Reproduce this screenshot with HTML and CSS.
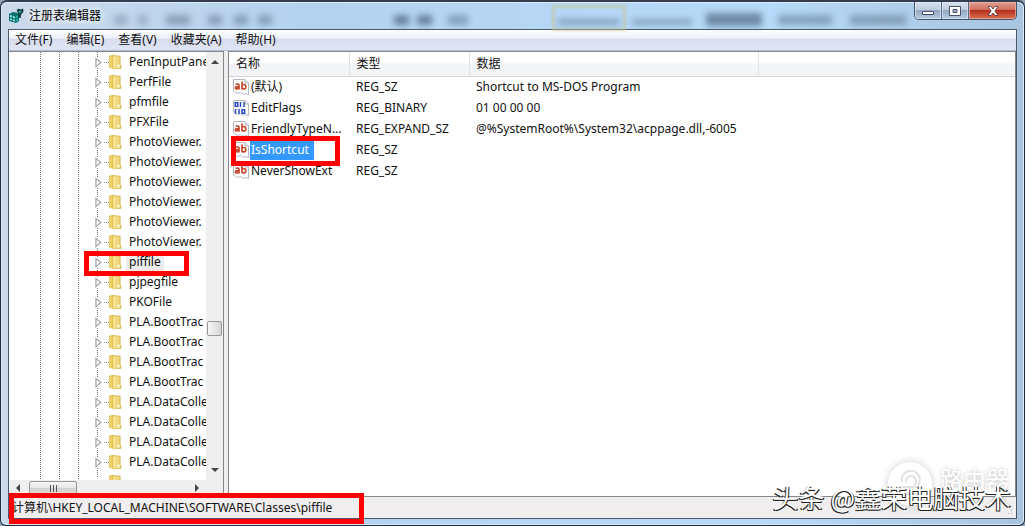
FILE: index.html
```
<!DOCTYPE html>
<html lang="zh-CN">
<head>
<meta charset="utf-8">
<title>注册表编辑器</title>
<link rel="stylesheet" href="styles.css">
</head>
<body>
<svg width="0" height="0" class="defs" aria-hidden="true">
  <defs>
    <linearGradient id="fa" x1="0" x2="1"><stop offset="0" stop-color="#f6dc78"/><stop offset="1" stop-color="#e0bd4c"/></linearGradient>
    <linearGradient id="fb" x1="0" x2="1"><stop offset="0" stop-color="#fdf3b4"/><stop offset="1" stop-color="#e6c65c"/></linearGradient>
    <symbol id="folder" viewBox="0 0 14 16">
      <path d="M1.200 2 6 1v13.500l-4.800-1z" fill="url(#fa)" stroke="#d9bb58" stroke-width=".6"/>
      <path d="M5.500 2h6.700v8.500l.8 1v3H5.500z" fill="url(#fb)" stroke="#cfac44" stroke-width=".6"/>
      <path d="M5 3 8 1v12.500L5.800 15.500 5 14.500z" fill="#fbe995" stroke="#d4b450" stroke-width=".5"/>
      <path d="M9.500 10.500h2v3h-2z" fill="#fffbe0"/>
    </symbol>
    <symbol id="arrow" viewBox="0 0 6 9"><path d="M.8 1v7l4.200-3.500z" fill="#fff" stroke="#a0a0a0"/></symbol>
    <symbol id="page" viewBox="0 0 16 16"><path d="M.5.500h11.500l3.500 3.500v11.500l-2.500-1-2.500.800-3-1.800-3 1L.5 12z" fill="#fff" stroke="#b4b8c0"/><path d="M12 .5V4h3.500" fill="#e8eaf0" stroke="#b4b8c0"/></symbol>
    <symbol id="str" viewBox="0 0 16 16"><use href="#page"/><g fill="none" stroke="#c8462c" stroke-width="1.700"><path d="M2.500 5.300q3.500-1 3.500 1.200v4M6 7.500q-3.800 0-3.600 1.500.4 1.800 3.600 0M9 2.500v8M9 6q3.800-1.500 3.800 1.700 0 3-3.800 1.800"/></g></symbol>
    <symbol id="bin" viewBox="0 0 16 16"><use href="#page"/><g fill="none" stroke="#2b4cc0" stroke-width="1.500"><path d="M2.200 2.700h2.600v3.600H2.200zM7.500 2v5M11 2v5M2.500 9v5M6 9v5M9 9.700h2.600v3.600H9z"/></g></symbol>
  </defs>
</svg>
<div class="window">
  <header class="titlebar">
    <div class="ghost" aria-hidden="true"><i class="g1"></i><i class="g2"></i><i class="g3"></i><i class="g4"></i><i class="g5"></i><i class="g6"></i><i class="g7"></i><i class="g8"></i><i class="g9"></i><i class="g10"></i><i class="g11"></i><i class="g12"></i><i class="g13"></i><i class="g14"></i><i class="g15"></i></div>
    <svg class="app-icon" viewBox="0 0 16 16"><path d="M1 6l4-2 6 1v8l-3 2-7-2z" fill="#0c6f70"/><path d="M2 7l2 .5v2L2 9zM5 8l2 .5v2L5 10zM2 10.500l2 .5v1.500L2 12zM5 11.500l2 .5v1.500L5 13z" fill="#8ff0e8"/><path d="M8 8l2-1v2l-2 1zM8 11.500l2-1v2l-2 1z" fill="#23b5ac"/><path d="M10 1l3 1 2-1v3l-2 2-1 4-2-2 1-3-2-2z" fill="#075255" stroke="#03282c" stroke-width=".7"/><path d="M11 3l2 .5-1 1.500z" fill="#8ff0e8"/></svg>
    <h1 class="title">注册表编辑器</h1>
    <div class="controls">
      <button class="ctl" aria-label="最小化"><svg viewBox="0 0 14 10" width="14" height="10"><path d="M1.500 5.500h11v3h-11z" fill="#fff" stroke="#4b5468"/></svg></button>
      <button class="ctl" aria-label="最大化"><svg viewBox="0 0 12 10" width="12" height="10"><path d="M.5.500h11v9H.5z" fill="#fff" stroke="#4b5468"/><path d="M4 3.500h4v3H4z" fill="#9bb0c8" stroke="#4b5468"/></svg></button>
      <button class="ctl close" aria-label="关闭"><svg viewBox="0 0 12 10" width="12" height="10"><path d="M1 .5h3L6 3 8 .5h3L7.800 5 11 9.500H8L6 7 4 9.500H1L4.200 5z" fill="#fff" stroke="#5b3a40" stroke-width=".8"/></svg></button>
    </div>
  </header>
  <main class="client">
    <nav class="menu">
      <button>文件(F)</button><button>编辑(E)</button><button>查看(V)</button><button>收藏夹(A)</button><button>帮助(H)</button>
    </nav>
    <div class="panes">
      <section class="tree-pane">
        <div class="tree-row">
          <ul class="tree">
            <li><svg class="arr"><use href="#arrow"/></svg><svg class="fld"><use href="#folder"/></svg><span>PenInputPane</span></li>
            <li><svg class="arr"><use href="#arrow"/></svg><svg class="fld"><use href="#folder"/></svg><span>PerfFile</span></li>
            <li><svg class="arr"><use href="#arrow"/></svg><svg class="fld"><use href="#folder"/></svg><span>pfmfile</span></li>
            <li><svg class="arr"><use href="#arrow"/></svg><svg class="fld"><use href="#folder"/></svg><span>PFXFile</span></li>
            <li><svg class="arr"><use href="#arrow"/></svg><svg class="fld"><use href="#folder"/></svg><span>PhotoViewer.</span></li>
            <li><svg class="arr"><use href="#arrow"/></svg><svg class="fld"><use href="#folder"/></svg><span>PhotoViewer.</span></li>
            <li><svg class="arr"><use href="#arrow"/></svg><svg class="fld"><use href="#folder"/></svg><span>PhotoViewer.</span></li>
            <li><svg class="arr"><use href="#arrow"/></svg><svg class="fld"><use href="#folder"/></svg><span>PhotoViewer.</span></li>
            <li><svg class="arr"><use href="#arrow"/></svg><svg class="fld"><use href="#folder"/></svg><span>PhotoViewer.</span></li>
            <li><svg class="arr"><use href="#arrow"/></svg><svg class="fld"><use href="#folder"/></svg><span>PhotoViewer.</span></li>
            <li class="current"><svg class="arr"><use href="#arrow"/></svg><svg class="fld"><use href="#folder"/></svg><span>piffile</span><b class="mark mark-tree"></b></li>
            <li><svg class="arr"><use href="#arrow"/></svg><svg class="fld"><use href="#folder"/></svg><span>pjpegfile</span></li>
            <li><svg class="arr"><use href="#arrow"/></svg><svg class="fld"><use href="#folder"/></svg><span>PKOFile</span></li>
            <li><svg class="arr"><use href="#arrow"/></svg><svg class="fld"><use href="#folder"/></svg><span>PLA.BootTrac</span></li>
            <li><svg class="arr"><use href="#arrow"/></svg><svg class="fld"><use href="#folder"/></svg><span>PLA.BootTrac</span></li>
            <li><svg class="arr"><use href="#arrow"/></svg><svg class="fld"><use href="#folder"/></svg><span>PLA.BootTrac</span></li>
            <li><svg class="arr"><use href="#arrow"/></svg><svg class="fld"><use href="#folder"/></svg><span>PLA.BootTrac</span></li>
            <li><svg class="arr"><use href="#arrow"/></svg><svg class="fld"><use href="#folder"/></svg><span>PLA.DataColle</span></li>
            <li><svg class="arr"><use href="#arrow"/></svg><svg class="fld"><use href="#folder"/></svg><span>PLA.DataColle</span></li>
            <li><svg class="arr"><use href="#arrow"/></svg><svg class="fld"><use href="#folder"/></svg><span>PLA.DataColle</span></li>
            <li><svg class="arr"><use href="#arrow"/></svg><svg class="fld"><use href="#folder"/></svg><span>PLA.DataColle</span></li>
            <li><svg class="arr"></svg><svg class="fld"><use href="#folder"/></svg></li>
          </ul>
          <div class="vscroll"><i class="up"></i><div class="vtrack"><div class="vthumb"></div></div><i class="down"></i></div>
        </div>
        <div class="hscroll"><i class="left"></i><div class="hthumb"><i></i><i></i><i></i></div><i class="right"></i></div>
      </section>
      <section class="list-pane">
        <table class="values">
          <colgroup><col class="c1"><col class="c2"><col class="c3"><col></colgroup>
          <thead><tr><th>名称</th><th>类型</th><th>数据</th><th></th></tr></thead>
          <tbody>
            <tr><td><div class="name"><svg><use href="#str"/></svg><span>(默认)</span></div></td><td>REG_SZ</td><td>Shortcut to MS-DOS Program</td><td></td></tr>
            <tr><td><div class="name"><svg><use href="#bin"/></svg><span>EditFlags</span></div></td><td>REG_BINARY</td><td>01 00 00 00</td><td></td></tr>
            <tr><td><div class="name"><svg><use href="#str"/></svg><span>FriendlyTypeN...</span></div></td><td>REG_EXPAND_SZ</td><td>@%SystemRoot%\System32\acppage.dll,-6005</td><td></td></tr>
            <tr><td><div class="name selected"><svg><use href="#str"/></svg><span>IsShortcut</span><b class="mark mark-value"></b></div></td><td>REG_SZ</td><td></td><td></td></tr>
            <tr><td><div class="name"><svg><use href="#str"/></svg><span>NeverShowExt</span></div></td><td>REG_SZ</td><td></td><td></td></tr>
          </tbody>
        </table>
      </section>
    </div>
    <footer class="status"><span>计算机\HKEY_LOCAL_MACHINE\SOFTWARE\Classes\piffile</span><b class="mark mark-status"></b><i class="grip"></i></footer>
  </main>
  <div class="brand"><svg viewBox="0 0 44 44"><circle cx="22" cy="22" r="22" fill="#fff"/><g fill="none" stroke="#e2e2e2" stroke-width="2"><path d="M14 20a9 9 0 1 1 16 3M18 20a5 5 0 1 1 8 3"/><rect x="13" y="25" width="18" height="7" rx="2"/></g></svg><span>路由器</span></div>
  <div class="credit">头条 @鑫荣电脑技术</div>
</div>
</body>
</html>
```
FILE: styles.css
```
* { box-sizing: border-box; }
body { margin: 0; background: #8fa4bb; font: 12px/20px "Noto Sans", "Noto Sans CJK SC", sans-serif; color: #111; }
.defs { position: absolute; }
.window {
  position: relative; height: 100vh; display: flex; flex-direction: column;
  padding: 0 7px 6px; border: 1px solid #1d2a3a; border-top: 2px solid #343c50;
  border-radius: 7px 7px 6px 6px; overflow: hidden;
  background: linear-gradient(90deg, #cbd9ea, #b4d2f0 30%, #b6daf8 75%, #a9c4df);
  box-shadow: inset 0 0 0 1px #dcecfa;
}
.titlebar { position: relative; display: flex; align-items: center; height: 27px; gap: 5px; flex: none; }
.app-icon { width: 16px; height: 16px; }
.title { margin: 0; flex: 1; font-size: 12px; line-height: 20px; font-weight: 400; color: #000; text-shadow: 0 0 6px #fff, 0 0 8px #fff; position: relative; }
.controls { position: relative; align-self: flex-start; display: flex; border: 1px solid #45566c; border-top: 0; border-radius: 0 0 5px 5px; overflow: hidden; }
.ctl { width: 27px; height: 17px; padding: 0; border: 0; border-right: 1px solid #5b6d84; display: grid; place-items: center; background: linear-gradient(#d6e2ef, #bccbdc 48%, #93a8c1 50%, #b5cce2); box-shadow: inset 0 0 0 1px #e3ecf5aa; }
.ctl.close { width: 47px; border-right: 0; background: linear-gradient(#e0a096, #cf6a5a 48%, #b5301f 50%, #d8704f); box-shadow: inset 0 0 0 1px #f0b8a8aa; }
.ghost { position: absolute; inset: 0; }
.ghost i { position: absolute; top: 13px; height: 10px; filter: blur(3px); background: #566f8a; opacity: .5; }
.ghost .g1 { left: 106px; width: 14px; opacity: .35; }
.ghost .g2 { left: 130px; width: 10px; opacity: .35; }
.ghost .g3 { left: 158px; width: 24px; }
.ghost .g4 { left: 200px; width: 14px; }
.ghost .g5 { left: 226px; width: 14px; }
.ghost .g6 { left: 250px; width: 14px; }
.ghost .g7 { left: 544px; width: 74px; top: 3px; height: 26px; background: none; border: 3px solid #c8c48a; filter: blur(1px); }
.ghost .g8 { left: 550px; width: 62px; top: 17px; height: 6px; }
.ghost .g9 { left: 624px; width: 60px; top: 17px; height: 6px; }
.ghost .g10 { left: 698px; width: 56px; height: 13px; top: 11px; opacity: .75; }
.ghost .g11 { left: 386px; width: 15px; opacity: .8; }
.ghost .g12 { left: 409px; width: 15px; opacity: .8; }
.ghost .g13 { left: 440px; width: 20px; }
.ghost .g14 { left: 770px; width: 54px; }
.ghost .g15 { left: 842px; width: 56px; }
.client { flex: 1; min-height: 0; display: flex; flex-direction: column; border: 1px solid #49596b; background: #f0eeee; }
.menu { flex: none; display: flex; align-items: center; gap: 14px; height: 21px; padding-left: 6px; background: linear-gradient(#fff, #eef1f8 40%, #d8deef 45%, #dfe4f4); border-bottom: 1px solid #b8bcc8; }
.menu button { padding: 0; border: 0; background: none; font: inherit; color: #111; }
.panes { flex: 1; min-height: 0; display: flex; gap: 4px; }
.tree-pane { width: 215px; flex: none; display: flex; flex-direction: column; background: #f0f0f0; border: 1px solid #828790; border-left: 0; }
.tree-row { flex: 1; min-height: 0; display: flex; }
.tree {
  flex: 1; min-width: 0; margin: 0; padding: 0; list-style: none; overflow: hidden; background-color: #fff;
  background-image: repeating-linear-gradient(transparent 0 1px, #fff 1px 2px), linear-gradient(90deg, transparent 31px, #777 31px 32px, transparent 32px 50px, #777 50px 51px, transparent 51px 69px, #777 69px 70px, transparent 70px 88px, #777 88px 89px, transparent 89px);
}
.tree li { position: relative; display: flex; align-items: center; height: 20px; padding-left: 86px; white-space: nowrap; }
.arr { width: 7px; height: 11px; flex: none; background: #fff; }
.fld { width: 14px; height: 16px; flex: none; margin-left: 6px; }
.tree li::before { content: ""; position: absolute; left: 95px; top: 10px; width: 5px; border-top: 1px dotted #888; }
.tree span { margin-left: 4px; padding: 0 3px; line-height: 18px; }
.tree .current span { background: #ececec; }
.vscroll { width: 17px; flex: none; display: flex; flex-direction: column; align-items: center; padding: 8px 0; background: #efefef; }
.up, .down, .left, .right { border: 4px solid transparent; flex: none; }
.up { border-top: 0; border-bottom-color: #444; }
.down { border-bottom: 0; border-top-color: #444; }
.vtrack { flex: 1; display: flex; flex-direction: column; justify-content: flex-end; padding-bottom: 132px; }
.vthumb { width: 15px; height: 15px; border: 1px solid #979797; border-radius: 2px; background: linear-gradient(90deg, #f5f5f5, #d6d6d6); }
.hscroll { flex: none; height: 16px; display: flex; align-items: center; padding: 0 24px 0 7px; background: #efefef; }
.left { border-left: 0; border-right-color: #444; }
.right { border-right: 0; border-left-color: #444; margin-left: auto; }
.hthumb { width: 48px; height: 15px; margin-left: 9px; display: flex; align-items: center; justify-content: center; gap: 2px; border: 1px solid #979797; border-radius: 2px; background: linear-gradient(#f6f6f6, #e4e4e4 50%, #d2d2d2 50%, #dcdcdc); }
.hthumb i { width: 1px; height: 7px; background: #555; }
.list-pane { flex: 1; min-width: 0; background: #fff; border: 1px solid #828790; }
.values { width: 100%; border-collapse: collapse; table-layout: fixed; }
.c1, .c2 { width: 120px; }
.c3 { width: 289px; }
.values th { height: 24px; padding: 0 0 0 7px; text-align: left; font-weight: 400; line-height: 20px; background: linear-gradient(#fff 45%, #f3f4f6 50%); border-bottom: 1px solid #d5d5d5; border-right: 1px solid #e0e3e8; }
.values th:last-child { border-right: 0; }
.values td { height: 21px; padding: 0 0 0 7px; line-height: 20px; white-space: nowrap; }
.values tbody td:first-child { padding-left: 4px; }
.name { position: relative; display: flex; align-items: center; height: 21px; gap: 1px; }
.name svg { width: 16px; height: 16px; flex: none; }
.name span { padding: 0 1px; }
.selected span { padding-right: 5px; background: #3399ff; color: #fff; }
.status { position: relative; flex: none; height: 21px; padding-left: 3px; line-height: 21px; background: #f0eeee; }
.grip { position: absolute; right: 2px; bottom: 2px; width: 10px; height: 10px; background: radial-gradient(#aaa 1px, transparent 1px) 0 0 / 3px 3px; clip-path: polygon(100% 0, 100% 100%, 0 100%); }
.mark { position: absolute; border: 5px solid #fe0000; z-index: 2; }
.mark-tree { left: 75px; top: -1px; width: 105px; height: 25px; }
.mark-value { left: -2px; top: -4px; width: 109px; height: 30px; }
.mark-status { left: 0; top: -4px; width: 355px; height: 31px; }
.brand { position: absolute; right: 15px; bottom: 19px; display: flex; align-items: flex-start; gap: 8px; font-size: 23px; line-height: 34px; color: #fff; text-shadow: 0 0 4px #bbb; }
.brand svg { width: 44px; height: 44px; border-radius: 50%; box-shadow: 0 0 8px #ccc; }
.credit { position: absolute; right: 13px; bottom: 12px; font: 26px/32px "Noto Sans CJK SC", sans-serif; color: #fff; text-shadow: -1px 1px 0 #222, 1px 1px 0 #222; white-space: nowrap; }
```
